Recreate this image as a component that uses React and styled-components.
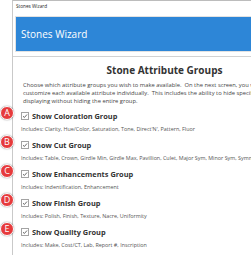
import styled, { createGlobalStyle } from "styled-components";

const GlobalStyle = createGlobalStyle`
  html, body {
    margin: 0;
    padding: 0;
    background: #fff;
    overflow: hidden;
  }
  body {
    font-family: "Open Sans", "Noto Sans", sans-serif;
  }
`;

const Page = styled.div`
  width: 251px;
  height: 255px;
  overflow: hidden;
  background: #fff;
`;

const Window = styled.div`
  margin-left: 12px;
  width: 296px;
  height: 255px;
  box-sizing: border-box;
  border-left: 1px solid #c9c9c9;
  border-top: 1px solid #bcbcbc;
`;

const TitleBar = styled.div`
  height: 15px;
  padding-left: 3px;
  font-size: 4.7px;
  line-height: 11px;
  color: #222;
`;

const HeaderArea = styled.div`
  padding: 0 0 4px 2px;
  border-bottom: 1px solid #d2d2d2;
`;

const Banner = styled.div`
  height: 34px;
  display: flex;
  align-items: center;
  padding-left: 5px;
  background: #2d86d7;
  border: 1px solid #e2e2e2;
  border-right: none;
  color: #fff;
  font-size: 10px;
`;

const Content = styled.div`
  padding: 7px 0 0 8px;
`;

const Heading = styled.h1`
  margin: 0;
  font-size: 10px;
  line-height: 12px;
  font-weight: 700;
  color: #333;
  text-align: center;
`;

const Description = styled.p`
  margin: 5px 0 0 2px;
  font-size: 5.8px;
  line-height: 8px;
  color: #444;
  white-space: nowrap;
`;

const Group = styled.div`
  position: relative;
  margin-top: ${(props) => (props.first ? "5px" : "6px")};
`;

const Row = styled.div`
  height: 12px;
  display: flex;
  align-items: center;
`;

const Badge = styled.span`
  position: absolute;
  left: -21px;
  top: -4px;
  width: 12px;
  height: 12px;
  border-radius: 50%;
  background: #e63a3c;
  border: 1px solid #fff;
  box-shadow: 0 0 1.5px rgba(0, 0, 0, 0.5);
  color: #fff;
  font-size: 9px;
  line-height: 12px;
  text-align: center;
`;

const Check = styled.span`
  width: 6px;
  height: 6px;
  border: 1px solid #a3a3a3;
  background: #fff;
  display: flex;
  align-items: center;
  justify-content: center;
`;

const Label = styled.span`
  margin-left: 3px;
  font-size: 7.4px;
  font-weight: 700;
  color: #333;
`;

const Includes = styled.div`
  margin-top: 3px;
  font-size: 5.4px;
  line-height: 8px;
  color: #555;
  white-space: nowrap;
`;

const groups = [
  { letter: "A", name: "Coloration", items: "Clarity, Hue/Color, Saturation, Tone, Direct'N', Pattern, Fluor" },
  { letter: "B", name: "Cut", items: "Table, Crown, Girdle Min, Girdle Max, Pavillion, Culet, Major Sym, Minor Sym, Symmetry" },
  { letter: "C", name: "Enhancements", items: "Indentification, Enhancement" },
  { letter: "D", name: "Finish", items: "Polish, Finish, Texture, Nacre, Uniformity" },
  { letter: "E", name: "Quality", items: "Make, Cost/CT, Lab, Report #, Inscription" },
];

const CheckMark = () => (
  <svg width="6" height="6" viewBox="0 0 6 6">
    <path d="M1 3.2 L2.4 4.5 L5 1.5" fill="none" stroke="#444" strokeWidth="0.8" />
  </svg>
);

const App = () => {
  return (
    <Page>
      <GlobalStyle />
      <Window>
        <TitleBar>Stones Wizard</TitleBar>
        <HeaderArea>
          <Banner>Stones Wizard</Banner>
        </HeaderArea>
        <Content>
          <Heading>Stone Attribute Groups</Heading>
          <Description>
            Choose which attribute groups you wish to make available.&nbsp; On the next screen, you will be able to
            <br />
            customize each available attribute individually.&nbsp; This includes the ability to hide specific attributes from
            <br />
            displaying without hiding the entire group.
          </Description>
          {groups.map((g, i) => (
            <Group key={g.letter} first={i === 0}>
              <Badge>{g.letter}</Badge>
              <Row>
                <Check>
                  <CheckMark />
                </Check>
                <Label>Show {g.name} Group</Label>
              </Row>
              <Includes>Includes: {g.items}</Includes>
            </Group>
          ))}
        </Content>
      </Window>
    </Page>
  );
};

export default App;
